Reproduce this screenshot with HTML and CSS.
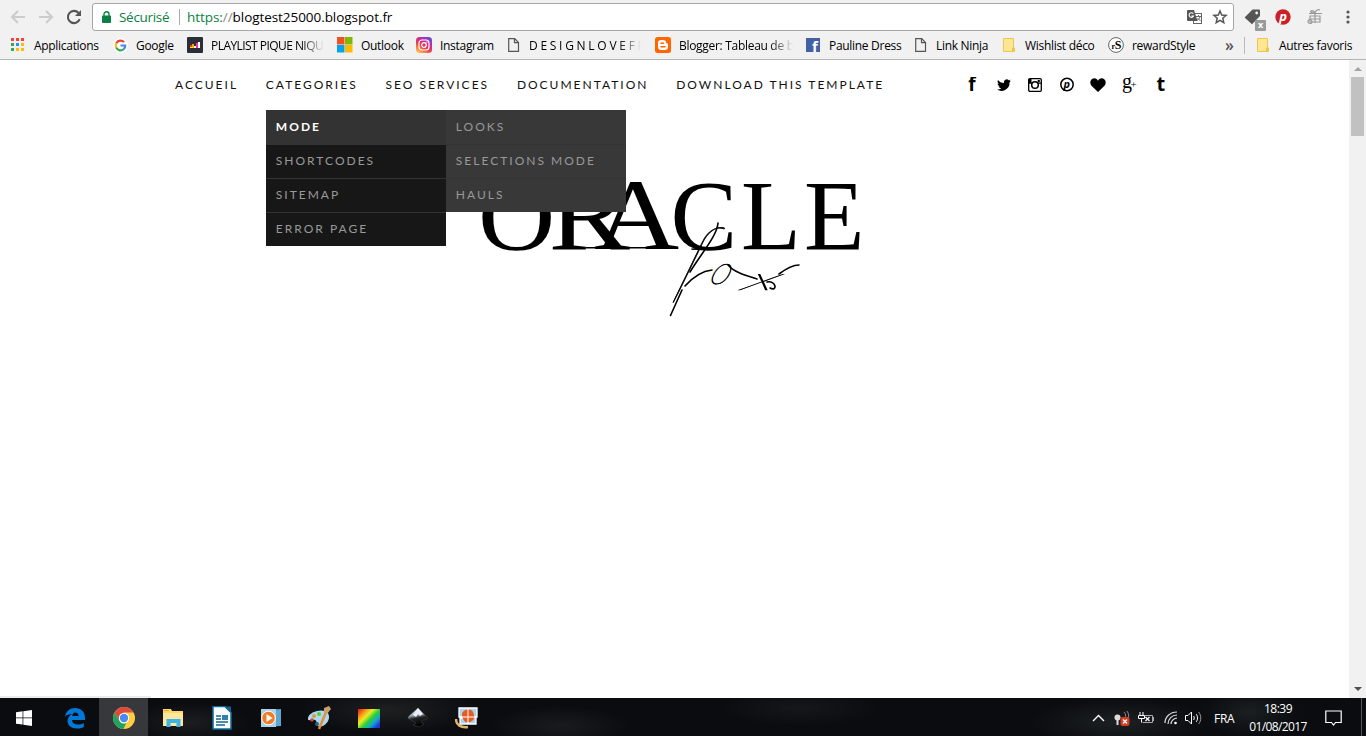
FILE: index.html
```
<!DOCTYPE html>
<html lang="fr">
<head>
  <meta charset="UTF-8">
  <title>blogtest25000</title>
  <link rel="stylesheet" href="styles.css">
</head>
<body>

<!-- Barre du navigateur -->
<header class="browser">
  <div class="toolbar">
    <div class="nav-buttons">
      <svg width="16" height="16" viewBox="0 0 16 16" fill="none" stroke="#ccc" stroke-width="2"><path d="M15 8H2M8 2L2 8l6 6"/></svg>
      <svg width="16" height="16" viewBox="0 0 16 16" fill="none" stroke="#ccc" stroke-width="2"><path d="M1 8h13M8 2l6 6-6 6"/></svg>
      <svg width="16" height="16" viewBox="0 0 16 16" fill="none" stroke="#555" stroke-width="2.1"><path d="M13.7 10.2A6.1 6.1 0 1 1 12.6 4"/><path d="M15 1v6H9z" fill="#555" stroke="none"/></svg>
    </div>
    <div class="omnibox">
      <svg class="lock" width="9" height="12" viewBox="0 0 9 12"><path d="M2 6V3.2a2.5 2.5 0 0 1 5 0V6" fill="none" stroke="#0b8043" stroke-width="1.4"/><rect y="4.5" width="9" height="7.5" rx=".7" fill="#0b8043"/></svg>
      <span class="secure">Sécurisé</span>
      <span class="url"><span class="scheme">https:</span><span class="slashes">//</span>blogtest25000.blogspot.fr</span>
      <svg class="translate" width="16" height="15" viewBox="0 0 16 15"><rect x="6.500" y="3.500" width="8" height="10" fill="#fff" stroke="#666"/><path d="M1 0h6l3.500 11H1a1 1 0 0 1-1-1V1a1 1 0 0 1 1-1z" fill="#555"/><path d="M6.300 3.700A2.300 2.300 0 1 0 6.500 6H4.500" fill="none" stroke="#fff" stroke-width="1.100"/><path d="M9 6.500h5M11.500 5v1.500M13 6.500c-.5 2-1.500 3-3 4M10.500 8l3 3" fill="none" stroke="#666"/></svg>
      <svg width="16" height="16" viewBox="0 0 16 16"><path d="M8 2l1.700 4 4.400.4-3.300 2.900 1 4.300L8 11.300l-3.800 2.300 1-4.300L1.900 6.400 6.300 6z" fill="none" stroke="#555" stroke-width="1.500"/></svg>
    </div>
    <div class="extensions">
      <span class="tag">
        <svg width="17" height="16" viewBox="0 0 17 16"><path d="M8.500.5H15a1 1 0 0 1 1 1V7l-8 8.300L.6 8.500z" fill="#555"/><circle cx="12.700" cy="4" r="1.400" fill="#f1f1f1"/></svg>
        <b class="badge">x</b>
      </span>
      <svg width="16" height="16" viewBox="0 0 16 16"><circle cx="8" cy="8" r="7.700" fill="#cb2027"/><text x="4.200" y="12" font-size="13" class="ico-bold ico-italic" fill="#fff">p</text></svg>
      <svg width="16" height="16" viewBox="0 0 16 16" fill="none" stroke="#999" stroke-width="1.200"><path d="M2 4.500h13M3 7h10v6H3zM8 5v9M3 10h10M8 4C4 4 3 3 4 2s3 0 4 2c1-3 3-4 5-3"/><circle cx="3" cy="12.500" r="2"/></svg>
      <svg width="4" height="14" viewBox="0 0 4 14" fill="#555"><circle cx="2" cy="2" r="1.600"/><circle cx="2" cy="7" r="1.600"/><circle cx="2" cy="12" r="1.600"/></svg>
    </div>
  </div>

  <div class="bookmarks">
    <a class="bm"><svg width="16" height="14" viewBox="0 0 16 14"><path fill="#f44336" d="M1 0h3v3H1zM6 0h3v3H6zM11 0h3v3h-3z"/><path fill="#34a853" d="M1 5h3v3H1zM1 10h3v3H1z"/><path fill="#2196f3" d="M6 5h3v3H6z"/><path fill="#fb0" d="M11 5h3v3h-3zM6 10h3v3H6zM11 10h3v3h-3z"/></svg><span>Applications</span></a>
    <a class="bm"><svg width="15" height="15" viewBox="0 0 16 16"><circle cx="8" cy="8" r="8" fill="#fff"/><g fill="none" stroke-width="2.300"><path d="M3.500 5.700A5 5 0 0 1 11.800 4.400" stroke="#ea4335"/><path d="M3.500 5.700a5 5 0 0 0 0 4.600" stroke="#fbbc05"/><path d="M3.500 10.300a5 5 0 0 0 7.900 1.700" stroke="#34a853"/><path d="M11.400 12A5 5 0 0 0 13 8H8" stroke="#4285f4"/></g></svg><span>Google</span></a>
    <a class="bm"><svg width="16" height="16" viewBox="0 0 16 16"><rect width="16" height="16" rx="1" fill="#2b2d38"/><path d="M3 8h2v3H3z" fill="#f33"/><path d="M5 7h2v4H5z" fill="#fa0"/><path d="M7 9h2v2H7z" fill="#fff"/><path d="M9 6h2v5H9z" fill="#f39"/><path d="M11 5h2v6h-2z" fill="#fff"/><path d="M3 10h3v1H3z" fill="#fe0"/></svg><span class="fade playlist">PLAYLIST PIQUE NIQUE</span></a>
    <a class="bm"><svg width="16" height="16" viewBox="0 0 16 16"><path fill="#f25022" d="M0 0h7.500v7.500H0z"/><path fill="#7fba00" d="M8 0h7.500v7.500H8z"/><path fill="#00a4ef" d="M0 8h7.500v7.500H0z"/><path fill="#ffb900" d="M8 8h7.500v7.500H8z"/></svg><span>Outlook</span></a>
    <a class="bm"><svg width="16" height="16" viewBox="0 0 16 16"><defs><linearGradient id="insta" x1=".2" y1="1" x2=".8" y2="0"><stop offset="0" stop-color="#fec34e"/><stop offset=".4" stop-color="#ee3b45"/><stop offset=".7" stop-color="#c32aa3"/><stop offset="1" stop-color="#5b50d4"/></linearGradient></defs><rect width="16" height="16" rx="3.500" fill="url(#insta)"/><rect x="3" y="3" width="10" height="10" rx="3" fill="none" stroke="#fff" stroke-width="1.200"/><circle cx="8" cy="8" r="2.300" fill="none" stroke="#fff" stroke-width="1.200"/><circle cx="11" cy="5" r=".7" fill="#fff"/></svg><span>Instagram</span></a>
    <a class="bm"><svg width="13" height="14" viewBox="0 0 13 14" fill="none" stroke="#555" stroke-width="1.200"><path d="M.7.700h6l3.800 3.800v8.800H.7zM6.500.7v4h4"/></svg><span class="fade design">D E S I G N L O V E F E S T</span></a>
    <a class="bm"><svg width="16" height="16" viewBox="0 0 16 16"><rect width="16" height="16" rx="2.500" fill="#ff6600"/><path d="M6 3h2.500a3 3 0 0 1 2.800 2.800c.1 1 1.700.3 1.700 1.400V10a3 3 0 0 1-3 3H6a3 3 0 0 1-3-3V6a3 3 0 0 1 3-3z" fill="#fff"/><path d="M6 6.200h2.500M6 9.800h4" stroke="#f60" stroke-width="1.500" stroke-linecap="round"/></svg><span class="fade blogger">Blogger: Tableau de bord</span></a>
    <a class="bm"><svg width="15" height="14" viewBox="0 0 15 14"><rect width="14" height="14" fill="#4460a5"/><text x="6" y="14" font-size="15" class="ico-bold" fill="#fff">f</text></svg><span>Pauline Dress</span></a>
    <a class="bm"><svg width="13" height="14" viewBox="0 0 13 14" fill="none" stroke="#555" stroke-width="1.200"><path d="M.7.700h6l3.800 3.800v8.800H.7zM6.500.7v4h4"/></svg><span>Link Ninja</span></a>
    <a class="bm"><svg width="14" height="14" viewBox="0 0 14 14" fill="#ffe694" stroke="#edc74b"><path d="M.5.5h10v13H.5zM9.500 10h2v3.500h-2z"/></svg><span>Wishlist déco</span></a>
    <a class="bm"><svg width="16" height="16" viewBox="0 0 16 16"><circle cx="8" cy="8" r="7.400" fill="#fff" stroke="#666"/><text x="3.500" y="12" font-size="12" class="ico-serif ico-heavy"><tspan font-size="8">r</tspan>S</text></svg><span>rewardStyle</span></a>
    <span class="more">»</span>
    <a class="bm others"><svg width="14" height="14" viewBox="0 0 14 14" fill="#ffe694" stroke="#edc74b"><path d="M.5.5h10v13H.5zM9.500 10h2v3.500h-2z"/></svg><span>Autres favoris</span></a>
  </div>
</header>

<!-- Page du blog -->
<div class="viewport">
  <main class="blog">
    <nav class="menu">
      <ul class="menu-list">
        <li>Accueil</li>
        <li class="has-sub">Categories
          <div class="dropdown">
            <ul class="sub">
              <li class="active">Mode</li>
              <li>Shortcodes</li>
              <li>Sitemap</li>
              <li>Error page</li>
            </ul>
            <ul class="sub sub-level2">
              <li>Looks</li>
              <li>Selections mode</li>
              <li>Hauls</li>
            </ul>
          </div>
        </li>
        <li>SEO Services</li>
        <li>Documentation</li>
        <li>Download this template</li>
      </ul>
      <div class="social">
        <svg viewBox="0 0 16 16"><text x="4.300" y="14" font-size="19" class="ico-bold">f</text></svg>
        <svg viewBox="0 0 16 16"><path d="M15 3.700c-.5.200-1 .4-1.600.4.600-.3 1-.9 1.200-1.500-.5.300-1.200.6-1.800.7A2.900 2.900 0 0 0 7.900 6C5.500 5.900 3.400 4.700 2 2.900c-.8 1.300-.4 3 .9 3.900-.5 0-.9-.1-1.300-.3 0 1.400 1 2.500 2.300 2.800-.4.100-.9.100-1.300 0 .4 1.200 1.400 2 2.700 2A5.800 5.800 0 0 1 1 12.500 8.100 8.100 0 0 0 13.500 5.200c.6-.4 1.100-.9 1.500-1.500z"/></svg>
        <svg viewBox="0 0 16 16" fill="none" stroke="#000"><rect x="1.700" y="1.700" width="12.600" height="12.600" rx="1.200" stroke-width="1.300"/><path d="M1.500 2h3v4h-3z" fill="#000" stroke="none"/><path d="M2 6.200h3M11 6.200h3" stroke-width="1.200"/><circle cx="8" cy="8" r="3.300" stroke-width="1.500"/><path d="M11 3.500h1.500v1H11z" fill="#000"/></svg>
        <svg viewBox="0 0 16 16"><circle cx="8" cy="7.500" r="6.200" fill="none" stroke="#000" stroke-width="1.500"/><text x="4.600" y="11" font-size="11" class="ico-bold ico-italic">p</text></svg>
        <svg viewBox="0 0 16 16"><path d="M8 15L1.500 8.700C-.8 6.300.3 1.500 4 1.300 6 1.200 7.300 2.300 8 3.700c.7-1.400 2-2.500 4-2.400 3.700.2 4.800 5 2.500 7.400z"/></svg>
        <svg viewBox="0 0 16 16"><text x="0" y="10.500" font-size="20" class="ico-serif">g</text><text x="8.500" y="10.500" font-size="11" class="ico-serif">+</text></svg>
        <svg viewBox="0 0 16 16"><text x="3.500" y="14" font-size="20" class="ico-bold">t</text></svg>
      </div>
    </nav>

    <svg class="logo" width="400" height="155" viewBox="470 170 400 155">
      <g class="logo-title">
        <text transform="translate(478 248.500) scale(1.070 1)">O</text>
        <text transform="translate(548.500 248.500) scale(1.220 1)">R</text>
        <text transform="translate(594 248.500) scale(1.180 1.010)">A</text>
        <text transform="translate(670.500 248.500) scale(1 1)">C</text>
        <text transform="translate(741 248.500) scale(.98 1)">L</text>
        <text transform="translate(804 248.500) scale(.99 1)">E</text>
      </g>
      <path d="M586 247.700h91" stroke="#000" stroke-width="1.600"/>
      <!-- signature -->
      <g class="logo-script">
        <text transform="translate(672 291) skewX(-20)" font-size="90">f</text>
        <text transform="translate(708 284) skewX(-20)" font-size="40">o</text>
        <text transform="translate(740 290) scale(1.900 .8) skewX(-20)" font-size="40">x</text>
      </g>
      <path class="swash" d="M682 290L670.500 315.500M718 223C717 236 701 254 690 272M685 286C693 277 703 271 712 270M728 265C734 272 744 275 757 279M779 274C787 268 793 265 799 265M770 288C778 292 776 280 767 282"/>
    </svg>
  </main>
  <div class="scrollbar">
    <i class="arrow up"></i>
    <i class="thumb"></i>
    <i class="arrow down"></i>
  </div>
</div>

<!-- Barre des tâches -->
<footer class="taskbar">
  <div class="apps">
    <span class="app start"><svg width="16" height="16" viewBox="0 0 16 16" fill="#fff"><path d="M0 2.300l6.600-1v6.300H0zM7.300 1.200L16 0v7.600H7.300zM0 8.300h6.600v6.300L0 13.700zM7.300 8.300H16V16l-8.700-1.300z"/></svg></span>
    <span class="app"><svg width="22" height="22" viewBox="0 0 22 22"><path d="M1 9.500C2 4 6 1 11 1c6 0 10 4 10 9.500V13H8c.2 3 2.500 4.500 6 4.500 2 0 4-.6 5.800-1.600V20c-2 1-4.300 1.500-7 1.500C7 21.500 3.500 18 3.500 14c0-3 1.700-5.500 4.500-7-3 .3-5.500 1-7 2.500zm7.200-.5h6.300c0-2-1-3.500-3-3.500S8.500 7 8.200 9z" fill="#0078d7"/></svg></span>
    <span class="app active"><svg width="22" height="22" viewBox="0 0 22 22"><circle cx="11" cy="11" r="11" fill="#ffcd40"/><path d="M1.500 5.500A11 11 0 0 1 20.500 5.500H11L6.300 13.700z" fill="#dd4b3e"/><path d="M1.500 5.500L6.200 13.700a5.500 5.500 0 0 0 7 2.300L10.500 22A11 11 0 0 1 1.500 5.500z" fill="#1da362"/><circle cx="11" cy="11" r="5.200" fill="#fff"/><circle cx="11" cy="11" r="4.200" fill="#4a8af4"/></svg></span>
    <span class="app"><svg width="22" height="20" viewBox="0 0 22 20"><path d="M1 1h8l1 2h11v15H1z" fill="#ffd96c"/><path d="M1 5h20v13H1z" fill="#ffe79b"/><path d="M2 2h5v1H2z" fill="#f7a81b"/><path d="M4.500 19v-8h14v8h-4v-4h-6v4z" fill="#3db4e8"/></svg></span>
    <span class="app"><svg width="20" height="24" viewBox="0 0 20 24"><path d="M1 .5h12l6 6V23H1z" fill="#f8fbfd" stroke="#0e6ba0" stroke-width="1.500"/><path d="M13 .5h6v6z" fill="#15618c"/><path d="M4 10h5M4 13h5M4 16h12M4 19h9" stroke="#16678f" stroke-width="1.500"/><path d="M10 9h6v5h-6z" fill="#337fa8"/></svg></span>
    <span class="app"><svg width="22" height="20" viewBox="0 0 22 20"><path d="M4 2l17-1v17L4 19z" fill="#5fa6cc"/><path d="M1 1h15v18H1z" fill="#a7d3eb"/><circle cx="8.500" cy="10" r="6.800" fill="#f27b22" stroke="#fff"/><path d="M6.500 6l6 4-6 4z" fill="#fff"/></svg></span>
    <span class="app"><svg width="25" height="24" viewBox="0 0 25 24"><path d="M10 5c7-2 13 1 12 7s-7 10-11 8c-3-2 0-5-3-6S0 16 1 12c1-4 5-6 9-7z" fill="#acd9ef"/><circle cx="7" cy="10" r="2" fill="#d94"/><circle cx="12" cy="8" r="2" fill="#5c3"/><circle cx="5" cy="14" r="1.700" fill="#c43"/><circle cx="10" cy="18" r="2" fill="#268"/><path d="M12 23l7-17" stroke="#e78d37" stroke-width="2.500"/><path d="M17 2l5-2 2 3-4 5-3-1z" fill="#c89d70"/></svg></span>
    <span class="app"><i class="spectrum"></i></span>
    <span class="app"><svg width="22" height="22" viewBox="0 0 22 22"><defs><linearGradient id="ink" x1="0" y1="0" x2=".2" y2="1"><stop stop-color="#fff"/><stop offset=".4" stop-color="#a9b8cc"/><stop offset=".6" stop-color="#222"/><stop offset="1" stop-color="#000"/></linearGradient></defs><path d="M11 1l9 9c2 2-1 3-4 3l-2 2 3 2-5 3-6-2 3-2-5-3C1 12 0 11 2 9z" fill="url(#ink)" stroke="#555" stroke-width=".4"/><path d="M11 1l5 6-3 2-2-2-2 3-3-2z" fill="#e8eef5"/></svg></span>
    <span class="app"><svg width="24" height="22" viewBox="0 0 24 22"><path d="M1 12c0 6 5 9 12 8" fill="none" stroke="#e2b568" stroke-width="2.500"/><g fill="#a8d4ef" stroke="#fff" stroke-width="1.300"><path d="M4 1h9v9H4zM13 1h9v9h-9zM5 11h8v6H5zM13 10h8v7h-8z"/></g><path d="M7 7c0-4 9-7 11-2s2 8-3 10-8-3-8-8z" fill="#e75a20"/><path d="M13 2v15M6 10h15" stroke="#fff"/></svg></span>
  </div>
  <div class="tray">
    <svg width="13" height="8" viewBox="0 0 13 8" fill="none" stroke="#fff" stroke-width="1.400"><path d="M1 7l5.500-5.500L12 7"/></svg>
    <svg width="17" height="17" viewBox="0 0 17 17"><circle cx="3.500" cy="7.500" r="3" fill="#ddd"/><path d="M3.500 7v8" stroke="#ddd" stroke-width="2"/><path d="M10 2c2 2 2 4 1 6M13 1c2 3 2 5 1 8" stroke="#888" fill="none"/><rect x="6.500" y="7" width="9" height="9" rx="2" fill="#d83b20"/><path d="M9 9.500l4 4m0-4l-4 4" stroke="#fff" stroke-width="1.400"/></svg>
    <svg width="16" height="13" viewBox="0 0 16 13" fill="none" stroke="#fff"><path d="M2 0v3M5 0v3M.5 3.500h6v3h-6zM3.500 6.500v4"/><path d="M7 3.500h7.500v7H4.500M15.500 5v4" stroke="#aaa"/><path d="M7.500 5l4 4m0-4l-4 4" stroke-width="1.300"/></svg>
    <svg class="wifi" width="14" height="14" viewBox="0 0 14 14" fill="none" stroke="#ddd" stroke-width="1.200"><path d="M1 12C1 6 6 1 13 1M4 13c0-5 4-9 9-9M7 13c0-3 3-6 6-6"/><circle cx="11.500" cy="12" r="1.300" fill="#fff" stroke="none"/></svg>
    <svg width="17" height="14" viewBox="0 0 17 14" fill="none" stroke="#fff"><path d="M.5 4.500h2.500L6.500 1v12L3 9.500H.5zM8.500 5c1 1 1 3 0 4"/><path d="M11 3c2 2 2 6 0 8"/><path d="M13.500 1c3 3 3 9 0 12" stroke="#999"/></svg>
    <span class="lang">FRA</span>
    <div class="clock"><span>18:39</span><span class="date">01/08/2017</span></div>
    <svg class="notif" width="17" height="17" viewBox="0 0 17 17" fill="none" stroke="#fff" stroke-width="1.200"><path d="M.8 1h15.400v11.500H10.500L8.500 15l-2-2.500H.8z"/></svg>
  </div>
</footer>

</body>
</html>
```
FILE: styles.css
```
* {
  box-sizing: border-box;
}

body {
  margin: 0;
  height: 736px;
  overflow: hidden;
  display: flex;
  flex-direction: column;
  background: #fff;
  font-family: "Open Sans", "Noto Sans", sans-serif;
  font-size: 12px;
  color: #000;
}

svg {
  display: block;
  flex: none;
}

ul {
  list-style: none;
  margin: 0;
  padding: 0;
}

.ico-bold {
  font-family: "Open Sans", sans-serif;
  font-weight: 700;
}

.ico-heavy {
  font-weight: 800;
}

.ico-italic {
  font-style: italic;
}

.ico-serif {
  font-family: "Liberation Serif", serif;
}

/* navigateur */
.browser {
  height: 60px;
  flex: none;
  background: #f1f1f1;
  border-bottom: 1px solid #b4b4b4;
}

.toolbar {
  display: flex;
  align-items: center;
  height: 34px;
  padding-left: 10px;
}

.nav-buttons {
  display: flex;
  gap: 12px;
  width: 82px;
}

.omnibox {
  display: flex;
  align-items: center;
  width: 1142px;
  height: 28px;
  padding: 0 5px 0 9px;
  background: #fff;
  border: 1px solid #a6a6a6;
  border-radius: 3px;
  font-size: 13.5px;
}

.secure {
  width: 61px;
  margin-left: 8px;
  border-right: 1px solid #aaa;
  line-height: 16px;
  color: #0b8043;
  letter-spacing: -0.3px;
}

.url {
  flex: 1;
  margin-left: 7px;
  letter-spacing: -0.06px;
}

.scheme {
  color: #0b8043;
}

.slashes {
  color: #888;
}

.translate {
  margin-right: 9px;
}

.extensions {
  display: flex;
  align-items: center;
  gap: 16px;
  padding-left: 10px;
}

.extensions svg:last-child {
  margin-left: 7px;
}

.tag {
  position: relative;
  margin-right: -2px;
}

.badge {
  position: absolute;
  left: 11px;
  top: 11px;
  width: 11px;
  height: 11px;
  background: #999;
  border-radius: 1px;
  color: #fff;
  font-size: 9px;
  line-height: 9px;
  text-align: center;
}

.bookmarks {
  display: grid;
  grid-template-columns: 103px 74px 150px 79px 92px 147px 151px 109px 88px 105px 117px 19px 110px;
  align-items: center;
  height: 22px;
  padding-left: 10px;
}

.bm {
  display: flex;
  align-items: center;
  gap: 8px;
  white-space: nowrap;
  letter-spacing: -0.3px;
}

.fade {
  overflow: hidden;
  -webkit-mask-image: linear-gradient(to right, #000 80%, transparent);
  mask-image: linear-gradient(to right, #000 80%, transparent);
}

.playlist {
  width: 113px;
  letter-spacing: -0.55px;
}

.design {
  width: 112px;
  letter-spacing: -0.2px;
}

.blogger {
  width: 114px;
}

.more {
  color: #555;
  font-size: 16px;
  font-weight: 600;
  line-height: 16px;
}

.others {
  border-left: 1px solid #bbb;
  padding-left: 12px;
}

/* page */
.viewport {
  display: flex;
  flex: 1;
}

.blog {
  flex: 1;
  background: linear-gradient(#ececec, #ececec) left bottom / 151px 2px no-repeat;
}

.menu {
  display: flex;
  height: 50px;
  padding-left: 175px;
  font-family: Lato, sans-serif;
  font-size: 12px;
  line-height: 50px;
  letter-spacing: 2px;
  text-transform: uppercase;
  color: #111;
}

.menu-list {
  display: flex;
  gap: 27.8px;
  width: 789px;
  white-space: nowrap;
}

.has-sub {
  position: relative;
}

.dropdown {
  position: absolute;
  top: 50px;
  left: 0;
  z-index: 2;
  display: flex;
  align-items: flex-start;
}

.sub {
  width: 180px;
  background: #171717;
  color: #999;
  line-height: 32px;
}

.sub li {
  height: 34px;
  padding-left: 10px;
  border-bottom: 1px solid #333;
}

.sub li:first-child {
  height: 35px;
  line-height: 34px;
}

.sub li:last-child {
  height: 33px;
  border-bottom: 0;
}

.sub .active {
  background: #333;
  color: #fff;
  font-weight: 700;
}

.sub-level2 {
  background: #383838;
}

.social {
  display: flex;
  align-items: center;
  gap: 15.5px;
}

.social svg {
  width: 16px;
  height: 16px;
  letter-spacing: 0;
  text-transform: none;
}

.logo {
  margin: 60px 0 0 470px;
}

.logo-title {
  font-family: "Liberation Serif", serif;
  font-size: 100px;
}

.logo-script {
  font-family: Lato, sans-serif;
  font-style: italic;
  font-weight: 100;
  stroke: #000;
  stroke-width: 0.7;
}

.swash {
  fill: none;
  stroke: #000;
  stroke-width: 1.6;
  stroke-linecap: round;
}

.scrollbar {
  display: flex;
  flex-direction: column;
  align-items: center;
  width: 17px;
  background: #f1f1f1;
}

.arrow {
  border: 4px solid transparent;
}

.up {
  margin: 3px 0 6px;
  border-bottom-color: #a3a3a3;
}

.thumb {
  width: 13px;
  height: 59px;
  background: #c1c1c1;
}

.down {
  margin: auto 0 3px;
  border-top-color: #505050;
}

/* barre des taches */
.taskbar {
  display: flex;
  justify-content: space-between;
  flex: none;
  height: 38px;
  color: #fff;
  background:
    radial-gradient(60px 20px at 190px 24px, #1b1d1f, transparent),
    radial-gradient(90px 24px at 390px 12px, #1d1f20, transparent),
    radial-gradient(70px 20px at 560px 28px, #191b1d, transparent),
    radial-gradient(80px 18px at 800px 10px, #15171a, transparent),
    radial-gradient(90px 24px at 1120px 24px, #1d2122, transparent),
    radial-gradient(50px 24px at 1250px 14px, #1b1f20, transparent),
    #0a0c10;
}

.apps {
  display: flex;
  padding-left: 1px;
}

.app {
  display: flex;
  align-items: center;
  justify-content: center;
  width: 49px;
  padding-top: 2px;
}

.start {
  padding-right: 3px;
}

.app.active {
  background: #36383b;
}

.spectrum {
  width: 22px;
  height: 19px;
  background: linear-gradient(135deg, #f02b13 5%, #f9a71b 25%, #e8ee20 38%, #2dcc3d 55%, #16a6cd 72%, #2334d8 90%);
}

.tray {
  display: flex;
  align-items: center;
  width: 270px;
  margin-right: 4px;
  padding-top: 2px;
  border-right: 1px solid #555;
}

.tray svg {
  margin-right: 9px;
}

.tray svg + svg {
  margin-right: 7px;
}

.tray .wifi {
  margin: 0 7px 0 3px;
}

.lang {
  width: 28px;
  margin-left: 5px;
  letter-spacing: -0.3px;
}

.clock {
  display: flex;
  flex-direction: column;
  align-items: center;
  width: 72px;
  line-height: 18px;
  letter-spacing: -0.5px;
}

.date {
  letter-spacing: -0.6px;
}

.tray .notif {
  margin: 0 0 0 11px;
}
```
